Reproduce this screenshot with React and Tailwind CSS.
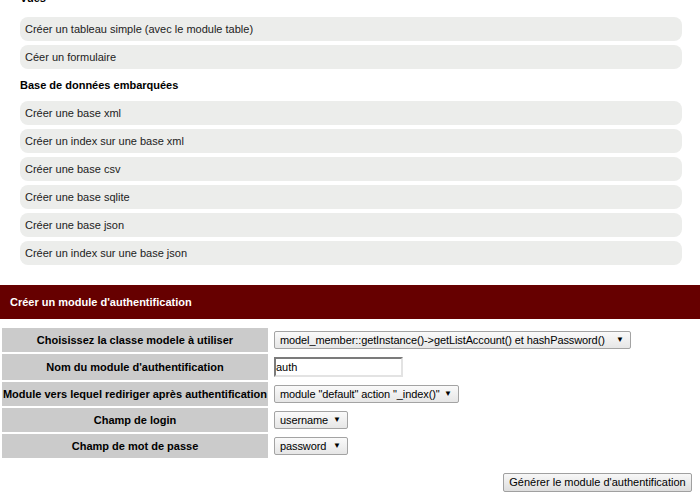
const font = { fontFamily: "'Liberation Sans', Arial, sans-serif" };

function Item({ label }) {
  return (
    <div className="h-[24px] flex items-center pl-[5px] rounded-[8px] bg-[#ecedeb] text-[11px] text-[#222]">
      {label}
    </div>
  );
}

function Select({ value, width }) {
  return (
    <div
      className={`h-[18px] ${width} flex items-center justify-between pl-[5px] pr-[6px] border border-[#a3a3a3] rounded-[2px] bg-gradient-to-b from-[#fafafa] to-[#e6e6e6] text-[11px] text-black whitespace-nowrap overflow-hidden`}
    >
      <span className="tracking-[-0.1px]">{value}</span>
      <span className="text-[8px] ml-[4px] shrink-0">▼</span>
    </div>
  );
}

function Row({ label, tall, children }) {
  return (
    <div className="flex gap-[2px]">
      <div className={`w-[266px] ${tall ? "h-[26px]" : "h-[24px]"} bg-[#cbcbcb] flex items-center justify-center text-[11px] font-bold text-black whitespace-nowrap`}>
        {label}
      </div>
      <div className="flex-1 flex items-center pl-[4px]">{children}</div>
    </div>
  );
}

export default function App() {
  const vues = ["Créer un tableau simple (avec le module table)", "Céer un formulaire"];
  const bases = [
    "Créer une base xml",
    "Créer un index sur une base xml",
    "Créer une base csv",
    "Créer une base sqlite",
    "Créer une base json",
    "Créer un index sur une base json",
  ];

  return (
    <div className="w-[700px] h-[500px] overflow-hidden bg-white" style={font}>
      <div className="pl-[20px] pr-[18px]">
        <div className="mt-[-8px] h-[13px] leading-[13px] text-[11px] font-bold text-black">Vues</div>
        <div className="mt-[12px] flex flex-col gap-[4px]">
          {vues.map(v => <Item key={v} label={v} />)}
        </div>
        <div className="mt-[10px] h-[13px] leading-[13px] text-[11px] font-bold text-black">Base de données embarquées</div>
        <div className="mt-[9px] flex flex-col gap-[4px]">
          {bases.map(v => <Item key={v} label={v} />)}
        </div>
      </div>

      {/* module d'authentification */}
      <div className="mt-[20px] h-[34px] bg-[#660000] flex items-center pl-[10px] text-[11px] font-bold text-white">
        Créer un module d'authentification
      </div>

      <div className="mt-[9px] px-[2px] flex flex-col gap-[2px]">
        <Row label="Choisissez la classe modele à utiliser">
          <Select value="model_member::getInstance()->getListAccount() et hashPassword()" width="w-[357px]" />
        </Row>
        <Row label="Nom du module d'authentification" tall>
          <div className="w-[129px] h-[20px] border-2 border-t-[#7b7b7b] border-l-[#7b7b7b] border-b-[#e3e3e3] border-r-[#e3e3e3] bg-white flex items-center text-[11px] text-black">
            auth
          </div>
        </Row>
        <Row label="Module vers lequel rediriger après authentification">
          <Select value={'module "default" action "_index()"'} width="w-[185px]" />
        </Row>
        <Row label="Champ de login">
          <Select value="username" width="w-[74px]" />
        </Row>
        <Row label="Champ de mot de passe">
          <Select value="password" width="w-[74px]" />
        </Row>
      </div>

      <div className="mt-[15px] flex justify-end pr-[8px]">
        <button className="w-[189px] h-[19px] border border-[#a0a0a0] rounded-[2px] bg-gradient-to-b from-[#f7f7f7] to-[#dedede] text-[11px] text-black flex items-center justify-center">
          Générer le module d'authentification
        </button>
      </div>
    </div>
  );
}
